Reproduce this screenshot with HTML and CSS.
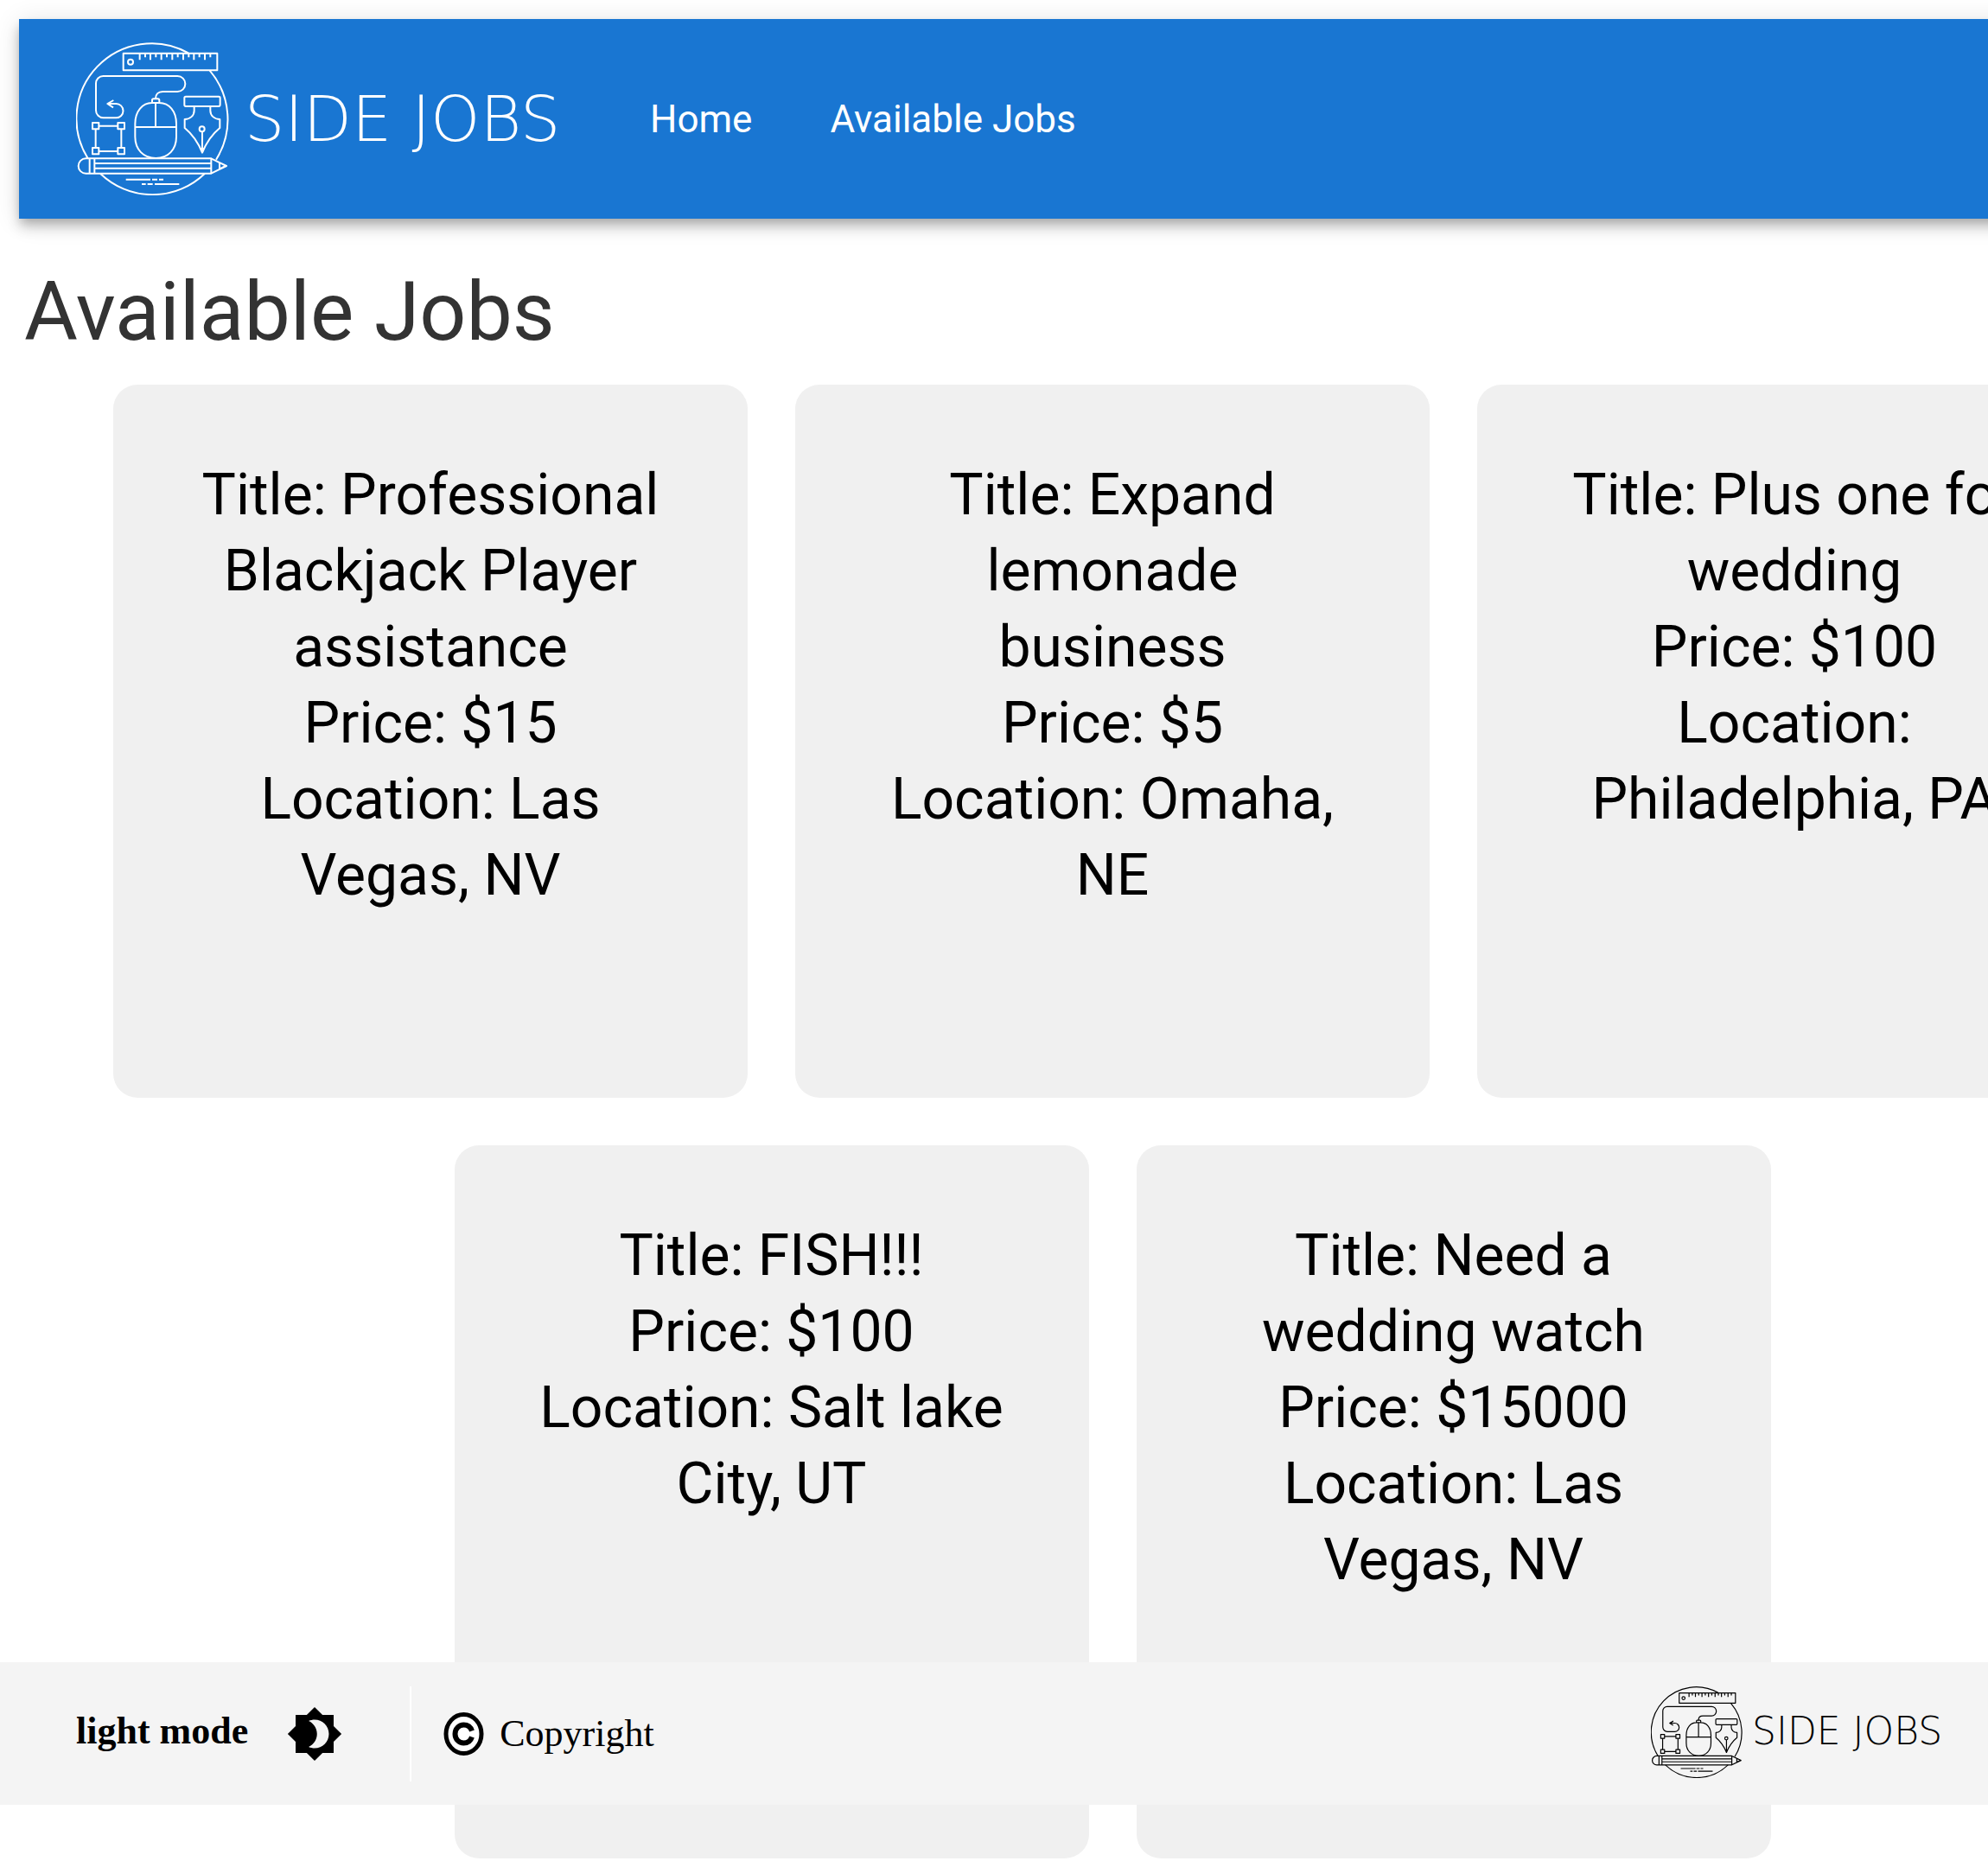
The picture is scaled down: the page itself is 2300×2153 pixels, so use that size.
FILE: index.html
```html
<!DOCTYPE html>
<html lang="en">
<head>
<meta charset="utf-8">
<meta name="viewport" content="width=device-width, initial-scale=1">
<title>Side Jobs - Available Jobs</title>
<link rel="stylesheet" href="styles.css">
</head>
<body>
<svg class="sprite" aria-hidden="true">
  <symbol id="emblem" viewBox="24 27 531 531">
    <g fill="none" stroke="currentColor" stroke-width="6" stroke-linejoin="round">
      <!-- badge circle, broken where the ruler and pencil cross it -->
      <path d="M65 430A261 261 0 0 1 414 64M488 125A261 261 0 0 1 510 434M471 482A261 261 0 0 1 108 482"/>
      <!-- ruler -->
      <path d="M188 65h326v59H188z"/>
      <circle cx="213" cy="95" r="9"/>
      <path d="M245 65v23M264 65v14M282 65v23M301 65v14M320 65v23M339 65v14M358 65v23M377 65v14M396 65v23M415 65v14M433 65v23M452 65v14M471 65v23M490 65v14"/>
      <!-- cable -->
      <path d="M300 222c0-14 9-24 25-24h51a27 27 0 0 0 0-54H118a25 25 0 0 0-25 25v94a26 26 0 0 0 26 26h44a24 24 0 0 0 0-49h-28M154 228l-21 12 20 13"/>
      <!-- mouse -->
      <path d="M288 236v-8q0-5 5-5h15q5 0 5 5v8M300 236v85M229 321h143M229 310c0-44 26-73 58-73h26c34 0 59 29 59 73v45c0 44-28 74-71 74s-72-30-72-74z"/>
      <!-- selection frame -->
      <path d="M104 317h65M104 405h65M92 328v64M181 328v64M81 306h22v22H81zM169 306h23v22h-23zM81 393h22v22H81zM169 393h23v22h-23z"/>
      <!-- pen nib -->
      <path d="M405 215h114q5 0 5 5v24q0 5-5 5H405q-5 0-5-5v-24q0-5 5-5zM434 250v14c0 17-14 30-33 30v30c27 22 46 49 61 86 15-37 34-64 61-86v-30c-19 0-33-13-33-30v-14M462 337v72M456 394l6 16 6-16"/>
      <circle cx="461" cy="328" r="9"/>
      <!-- pencil -->
      <path d="M493 430H58a26 26 0 0 0 0 52h435zM493 430l53 26-53 26M522 445v21l22-10M71 430v52M88 430v52M88 447h405M88 464h405"/>
      <!-- shadow dashes -->
      <path d="M197 503h85M288 503h18M312 503h15M252 519h14M272 519h18M297 519h85"/>
    </g>
  </symbol>
</svg>

<div class="page">
  <header class="topbar">
    <a class="logo" href="#">
      <svg class="emblem" aria-hidden="true"><use href="#emblem"/></svg>
      <span class="wordmark">SIDE JOBS</span>
    </a>
    <nav class="nav">
      <a href="#">Home</a>
      <a href="#">Available Jobs</a>
    </nav>
  </header>

  <main>
    <h1 class="title">Available Jobs</h1>
    <div class="jobs">
      <button class="job" type="button">
        <span>Title: Professional Blackjack Player assistance</span>
        <span>Price: $15</span>
        <span>Location: Las Vegas, NV</span>
      </button>
      <button class="job" type="button">
        <span>Title: Expand lemonade business</span>
        <span>Price: $5</span>
        <span>Location: Omaha, NE</span>
      </button>
      <button class="job" type="button">
        <span>Title: Plus one for wedding</span>
        <span>Price: $100</span>
        <span>Location: Philadelphia, PA</span>
      </button>
      <button class="job" type="button">
        <span>Title: FISH!!!</span>
        <span>Price: $100</span>
        <span>Location: Salt lake City, UT</span>
      </button>
      <button class="job" type="button">
        <span>Title: Need a wedding watch</span>
        <span>Price: $15000</span>
        <span>Location: Las Vegas, NV</span>
      </button>
    </div>
  </main>
</div>

<footer class="footer">
  <button class="mode" type="button">
    <span>light mode</span>
    <svg class="mode-icon" viewBox="0 0 24 24" aria-hidden="true"><path fill="currentColor" d="M20 8.69V4h-4.69L12 .69 8.69 4H4v4.69L.69 12 4 15.31V20h4.69L12 23.31 15.31 20H20v-4.69L23.31 12 20 8.69zM12 18c-.89 0-1.74-.2-2.5-.55C11.56 16.5 13 14.42 13 12s-1.44-4.5-3.5-5.45C10.26 6.2 11.11 6 12 6c3.31 0 6 2.69 6 6s-2.69 6-6 6z"/></svg>
  </button>
  <div class="copyright">
    <svg class="copyright-icon" viewBox="0 0 47 50" aria-hidden="true"><g stroke="currentColor"><ellipse cx="23.500" cy="25" rx="20.500" ry="22.500" stroke-width="5" fill="#fff"/><path fill="none" stroke-width="6" d="M33 21.500C31.500 17 28 14.500 23.500 14.500C18 14.500 13.500 19 13.500 25S18 35.500 23.500 35.500C28 35.500 31.500 33 33 28.500"/></g></svg>
    <span>Copyright</span>
  </div>
  <a class="logo logo-small" href="#">
    <svg class="emblem" aria-hidden="true"><use href="#emblem"/></svg>
    <span class="wordmark">SIDE JOBS</span>
  </a>
</footer>
</body>
</html>
```
FILE: styles.css
```css
* {
  box-sizing: border-box;
}

body {
  margin: 0;
  padding: 22px 22px 0;
  overflow-x: hidden;
  background: #fff;
  color: #000;
  font-family: Roboto, "Liberation Sans", sans-serif;
}

a {
  color: inherit;
  text-decoration: none;
}

button {
  border: 0;
  color: inherit;
  cursor: pointer;
}

.sprite {
  display: none;
}

.page {
  width: 110vw;
}

.topbar {
  display: flex;
  align-items: center;
  gap: 88px;
  padding: 27px 66px;
  background: #1976d2;
  color: #fff;
  box-shadow: 0 6px 11px -3px rgba(0, 0, 0, 0.2), 0 11px 14px rgba(0, 0, 0, 0.14), 0 3px 28px rgba(0, 0, 0, 0.12);
}

.logo {
  display: flex;
  align-items: center;
  gap: 18px;
  width: 576px;
}

.emblem {
  flex: none;
  width: 177px;
  height: 177px;
}

.wordmark {
  font: 200 73px/73px "DejaVu Sans", Inter, sans-serif;
  white-space: nowrap;
}

.nav {
  display: flex;
  gap: 90px;
  font-size: 44px;
  line-height: 66px;
}

.title {
  margin: 50px 0 27px;
  padding-left: 6px;
  color: #333;
  font-size: 95px;
  font-weight: 400;
  line-height: 115px;
}

.jobs {
  display: flex;
  flex-wrap: wrap;
  justify-content: center;
  gap: 55px;
}

.job {
  display: flex;
  flex-direction: column;
  width: 734px;
  min-height: 825px;
  padding: 84px 83px;
  border-radius: 28px;
  background: #f0f0f0;
  font: 400 66px/88px Roboto, "Liberation Sans", sans-serif;
  text-align: center;
}

.job span {
  width: 100%;
}

.footer {
  position: fixed;
  right: 0;
  bottom: 65px;
  left: 0;
  display: flex;
  align-items: center;
  height: 165px;
  padding: 0 50px 0 88px;
  background: #f4f4f4;
  font: 44px/50px "Liberation Serif", serif;
}

.mode {
  display: flex;
  align-items: flex-start;
  gap: 44px;
  padding: 0;
  background: none;
  font: inherit;
  font-weight: 700;
  line-height: 60px;
}

.mode-icon {
  width: 66px;
  height: 66px;
}

.copyright {
  display: flex;
  align-items: center;
  gap: 18px;
  height: 110px;
  margin-left: 77px;
  padding-left: 37px;
  border-left: 2px solid #fff;
}

.copyright-icon {
  width: 47px;
  height: 50px;
}

.logo-small {
  align-items: flex-start;
  gap: 11px;
  width: 340px;
  height: 110px;
  margin-left: auto;
}

.logo-small .emblem {
  width: 106px;
  height: 106px;
}

.logo-small .wordmark {
  font-size: 44px;
  line-height: 104px;
}
```
